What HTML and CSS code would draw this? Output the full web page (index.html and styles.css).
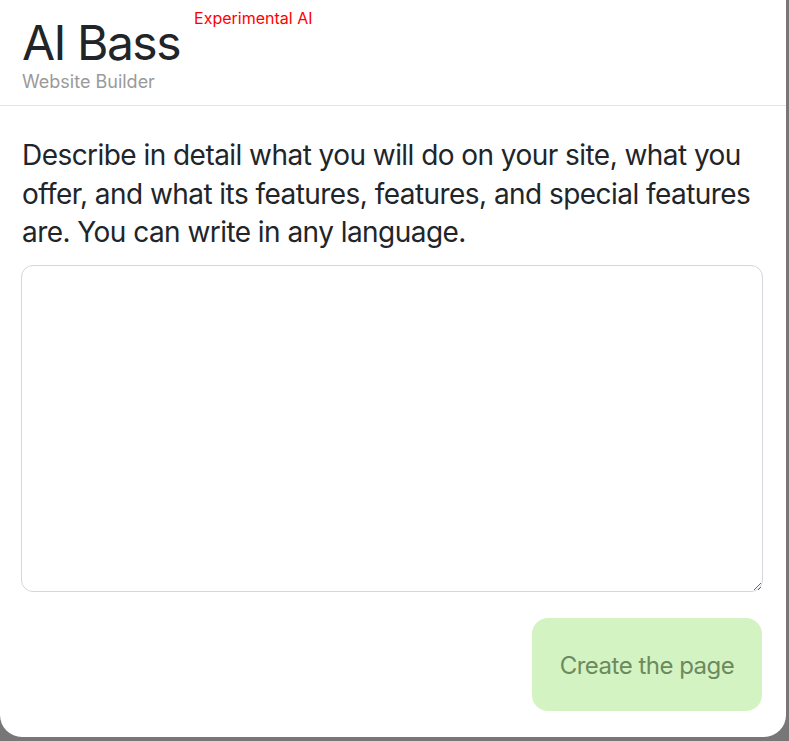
FILE: index.html
```html
<!DOCTYPE html>
<html lang="en">
<head>
<meta charset="utf-8">
<title>AI Bass</title>
<link rel="stylesheet" href="styles.css">
</head>
<body>
<div class="panel">
  <header class="head">
    <div class="brand">
      <h1 class="title">AI Bass</h1>
      <span class="tag">Experimental AI</span>
    </div>
    <div class="subtitle">Website Builder</div>
  </header>
  <main class="content">
    <p class="prompt">Describe in detail what you will do on your site, what you offer, and what its features, features, and special features are. You can write in any language.</p>
    <textarea class="field"></textarea>
    <div class="actions">
      <button class="create">Create the page</button>
    </div>
  </main>
</div>
</body>
</html>
```
FILE: styles.css
```css
html, body {
  margin: 0;
  padding: 0;
}
body {
  background: #777777;
  font-family: Inter, "Noto Sans", sans-serif;
  height: 741px;
  overflow: hidden;
}
.panel {
  width: 786px;
  height: 737px;
  background: #ffffff;
  border-radius: 0 0 22px 22px;
  box-sizing: border-box;
}
.head {
  height: 106px;
  border-bottom: 1px solid #e3e3e3;
  box-sizing: border-box;
  padding: 15px 22px 0;
}
.brand {
  display: flex;
  align-items: flex-start;
}
.title {
  margin: 0;
  font-size: 48px;
  font-weight: 400;
  line-height: 56px;
  color: #212529;
  letter-spacing: -1.5px;
}
.tag {
  margin: -7px 0 0 14px;
  font-size: 16px;
  line-height: 20px;
  color: #ff0000;
}
.subtitle {
  font-size: 18px;
  line-height: 22px;
  color: #9a9a9a;
  margin-top: 0;
}
.content {
  padding: 0 22px 0 21px;
}
.prompt {
  margin: 30px 0 0 1px;
  font-size: 28px;
  line-height: 38.5px;
  color: #212529;
  letter-spacing: -0.55px;
}
.field {
  display: block;
  width: 742px;
  height: 327px;
  margin-top: 13px;
  box-sizing: border-box;
  border: 1px solid #d3d6dd;
  border-radius: 12px;
  background: #fff;
  resize: vertical;
}
.actions {
  display: flex;
  justify-content: flex-end;
  margin-top: 26px;
}
.create {
  width: 230px;
  height: 93px;
  margin-right: 2px;
  padding-top: 4px;
  border: none;
  border-radius: 16px;
  background: #d4f3c2;
  color: #6c8a5e;
  font-family: Inter, "Noto Sans", sans-serif;
  font-size: 24px;
  letter-spacing: -0.5px;
}
```
